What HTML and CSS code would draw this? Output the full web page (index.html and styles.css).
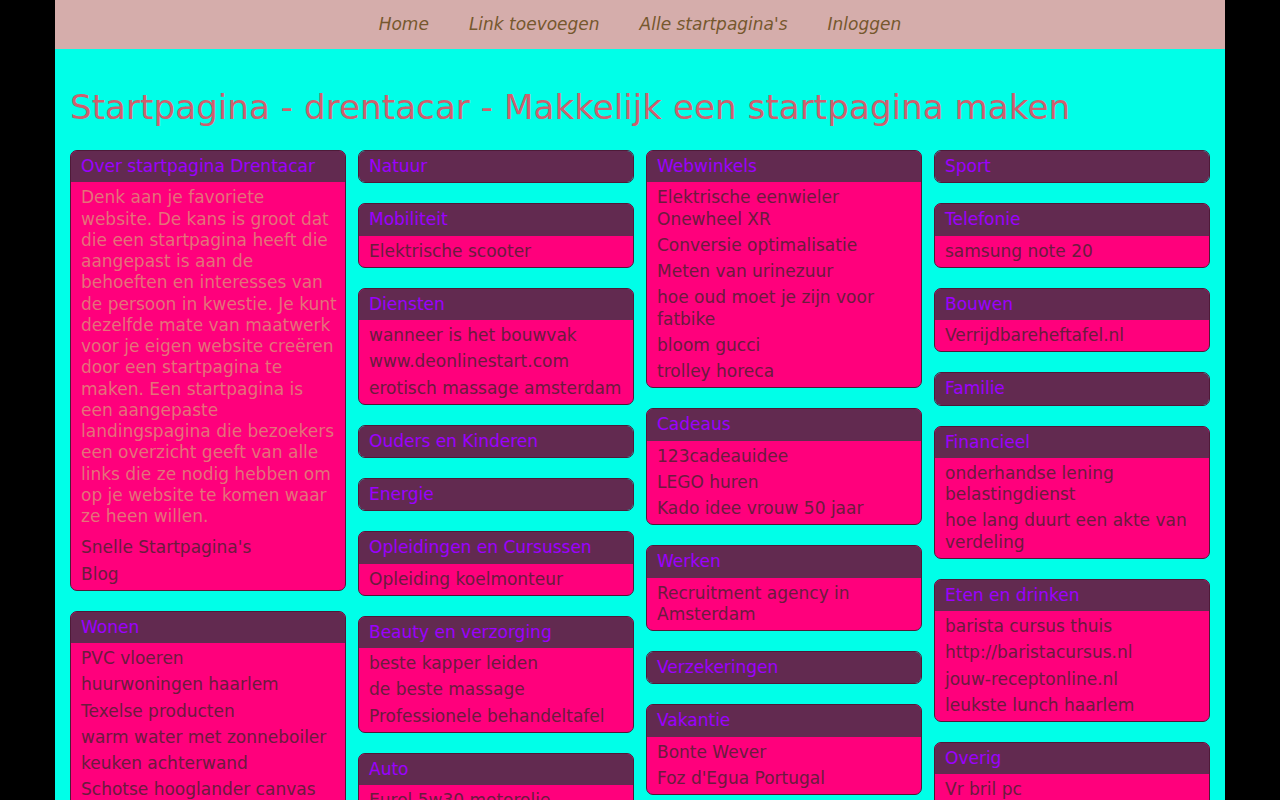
FILE: index.html
```html
<!DOCTYPE html>
<html lang="nl">
<head>
  <meta charset="UTF-8">
  <title>Startpagina - drentacar</title>
  <link rel="stylesheet" href="styles.css">
</head>
<body>
  <div class="wrap">

    <!-- menu -->
    <nav class="topnav">
      <a href="#">Home</a>
      <a href="#">Link toevoegen</a>
      <a href="#">Alle startpagina's</a>
      <a href="#">Inloggen</a>
    </nav>

    <h1 class="page-title">Startpagina - drentacar - Makkelijk een startpagina maken</h1>

    <div class="columns">

      <div class="col">
        <div class="panel">
          <div class="panel-head">Over startpagina Drentacar</div>
          <div class="panel-body">
            <p class="intro">Denk aan je favoriete website. De kans is groot dat die een startpagina heeft die aangepast is aan de behoeften en interesses van de persoon in kwestie. Je kunt dezelfde mate van maatwerk voor je eigen website creëren door een startpagina te maken. Een startpagina is een aangepaste landingspagina die bezoekers een overzicht geeft van alle links die ze nodig hebben om op je website te komen waar ze heen willen.</p>
            <a href="#">Snelle Startpagina's</a>
            <a href="#">Blog</a>
          </div>
        </div>
        <div class="panel">
          <div class="panel-head">Wonen</div>
          <div class="panel-body">
            <a href="#">PVC vloeren</a>
            <a href="#">huurwoningen haarlem</a>
            <a href="#">Texelse producten</a>
            <a href="#">warm water met zonneboiler</a>
            <a href="#">keuken achterwand</a>
            <a href="#">Schotse hooglander canvas</a>
          </div>
        </div>
      </div>

      <div class="col">
        <div class="panel">
          <div class="panel-head">Natuur</div>
        </div>
        <div class="panel">
          <div class="panel-head">Mobiliteit</div>
          <div class="panel-body">
            <a href="#">Elektrische scooter</a>
          </div>
        </div>
        <div class="panel">
          <div class="panel-head">Diensten</div>
          <div class="panel-body">
            <a href="#">wanneer is het bouwvak</a>
            <a href="#">www.deonlinestart.com</a>
            <a href="#">erotisch massage amsterdam</a>
          </div>
        </div>
        <div class="panel">
          <div class="panel-head">Ouders en Kinderen</div>
        </div>
        <div class="panel">
          <div class="panel-head">Energie</div>
        </div>
        <div class="panel">
          <div class="panel-head">Opleidingen en Cursussen</div>
          <div class="panel-body">
            <a href="#">Opleiding koelmonteur</a>
          </div>
        </div>
        <div class="panel">
          <div class="panel-head">Beauty en verzorging</div>
          <div class="panel-body">
            <a href="#">beste kapper leiden</a>
            <a href="#">de beste massage</a>
            <a href="#">Professionele behandeltafel</a>
          </div>
        </div>
        <div class="panel">
          <div class="panel-head">Auto</div>
          <div class="panel-body">
            <a href="#">Eurol 5w30 motorolie</a>
          </div>
        </div>
      </div>

      <div class="col">
        <div class="panel">
          <div class="panel-head">Webwinkels</div>
          <div class="panel-body">
            <a href="#">Elektrische eenwieler Onewheel XR</a>
            <a href="#">Conversie optimalisatie</a>
            <a href="#">Meten van urinezuur</a>
            <a href="#">hoe oud moet je zijn voor fatbike</a>
            <a href="#">bloom gucci</a>
            <a href="#">trolley horeca</a>
          </div>
        </div>
        <div class="panel">
          <div class="panel-head">Cadeaus</div>
          <div class="panel-body">
            <a href="#">123cadeauidee</a>
            <a href="#">LEGO huren</a>
            <a href="#">Kado idee vrouw 50 jaar</a>
          </div>
        </div>
        <div class="panel">
          <div class="panel-head">Werken</div>
          <div class="panel-body">
            <a href="#">Recruitment agency in Amsterdam</a>
          </div>
        </div>
        <div class="panel">
          <div class="panel-head">Verzekeringen</div>
        </div>
        <div class="panel">
          <div class="panel-head">Vakantie</div>
          <div class="panel-body">
            <a href="#">Bonte Wever</a>
            <a href="#">Foz d'Egua Portugal</a>
          </div>
        </div>
      </div>

      <div class="col">
        <div class="panel">
          <div class="panel-head">Sport</div>
        </div>
        <div class="panel">
          <div class="panel-head">Telefonie</div>
          <div class="panel-body">
            <a href="#">samsung note 20</a>
          </div>
        </div>
        <div class="panel">
          <div class="panel-head">Bouwen</div>
          <div class="panel-body">
            <a href="#">Verrijdbareheftafel.nl</a>
          </div>
        </div>
        <div class="panel">
          <div class="panel-head">Familie</div>
        </div>
        <div class="panel">
          <div class="panel-head">Financieel</div>
          <div class="panel-body">
            <a href="#">onderhandse lening belastingdienst</a>
            <a href="#">hoe lang duurt een akte van verdeling</a>
          </div>
        </div>
        <div class="panel">
          <div class="panel-head">Eten en drinken</div>
          <div class="panel-body">
            <a href="#">barista cursus thuis</a>
            <a href="#">http://baristacursus.nl</a>
            <a href="#">jouw-receptonline.nl</a>
            <a href="#">leukste lunch haarlem</a>
          </div>
        </div>
        <div class="panel">
          <div class="panel-head">Overig</div>
          <div class="panel-body">
            <a href="#">Vr bril pc</a>
          </div>
        </div>
      </div>

    </div>
  </div>
</body>
</html>
```

FILE: styles.css
```css
* {
  margin: 0;
  padding: 0;
  box-sizing: border-box;
}

html, body {
  background: #000;
  font-family: "DejaVu Sans", Verdana, sans-serif;
  font-size: 17px;
  line-height: 1.25;
}

.wrap {
  width: 1170px;
  min-height: 800px;
  margin: 0 auto;
  padding: 0 15px;
  background: #00ffe8;
}

/* menu bovenaan */
.topnav {
  height: 49px;
  margin: 0 -15px;
  background: #d5adab;
  display: flex;
  justify-content: center;
  align-items: center;
  gap: 40px;
}

.topnav a {
  color: #76582e;
  font-style: italic;
  text-decoration: none;
}

.page-title {
  font-size: 34.2px;
  font-weight: normal;
  line-height: 40px;
  color: #cf5f6e;
  margin: 38px 0 23px;
}

/* vier kolommen met blokken */
.columns {
  display: grid;
  grid-template-columns: repeat(4, 1fr);
  gap: 12px;
  align-items: start;
}

.col {
  display: flex;
  flex-direction: column;
  gap: 20px;
}

.panel {
  border: 1px solid #4e1a38;
  border-radius: 7px;
  overflow: hidden;
  background: #ff007c;
}

.panel-head {
  background: #622a50;
  color: #9c00ff;
  padding: 5px 10px;
}

.panel-body {
  padding: 5px 10px;
  display: flex;
  flex-direction: column;
  gap: 5px;
}

.panel-body a {
  color: #6a1c3e;
  text-decoration: none;
}

.intro {
  color: #e47279;
  margin-right: -3px;
  margin-bottom: 5px;
}
```
